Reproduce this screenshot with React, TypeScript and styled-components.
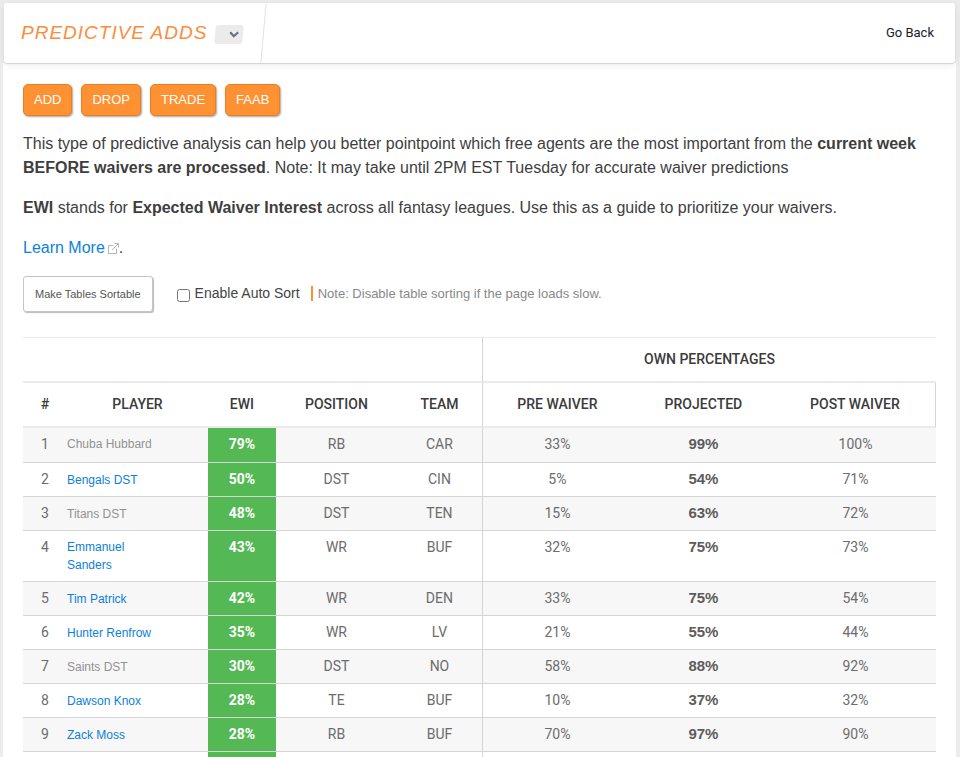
import React, { useState } from "react";
import styled, { createGlobalStyle } from "styled-components";

const GlobalStyle = createGlobalStyle`
  * { box-sizing: border-box; }
  body {
    margin: 0;
    overflow: hidden;
    background: #ececec;
    color: #3e3e3e;
    font-family: "Liberation Sans", Arial, sans-serif;
    font-size: 16px;
    line-height: 24px;
  }
  a { color: #0c81dc; text-decoration: none; }
  p { margin: 0 0 16px; }
`;

const Page = styled.div`
  padding: 3px 4px 0 3px;
  height: 100vh;
  overflow: hidden;
`;

const TopBar = styled.header`
  display: flex;
  align-items: stretch;
  justify-content: space-between;
  position: relative;
  height: 60px;
  margin: 0 1px;
  background: #fff;
  border-radius: 3px;
  box-shadow: 0 1px 1px #d4d4d4, 0 2px 8px rgba(0, 0, 0, 0.08);
`;

const TitleGroup = styled.div`
  display: flex;
  align-items: center;
  padding-left: 17px;
`;

const Title = styled.h1`
  margin: 0 8px 0 0;
  color: #fb8d3c;
  font-size: 19px;
  font-style: italic;
  font-weight: 400;
  letter-spacing: 1px;
  line-height: 58px;
`;

const MenuButton = styled.button`
  display: flex;
  align-items: center;
  justify-content: flex-end;
  width: 28px;
  height: 19px;
  margin: 3px 20px 0 0;
  padding: 0 4px 0 0;
  border: 0;
  border-radius: 3px;
  background: #ebebeb;
  color: #66747f;
  transform: skewX(-5deg);
`;

const Divider = styled.span`
  align-self: stretch;
  width: 1px;
  background: #e2e2e2;
  transform: skewX(-5deg);
`;

const BackLink = styled.a`
  align-self: center;
  padding: 0 21px 0 0;
  color: #17202b;
  font-family: Roboto, sans-serif;
  font-size: 13px;
`;

const Content = styled.main`
  padding: 21px 20px 0;
  background: #fff;
  min-height: 100%;
`;

const Actions = styled.nav`
  display: flex;
  gap: 9px;
  margin-bottom: 16px;
`;

const ActionLink = styled.a`
  height: 32px;
  padding: 0 10px;
  border: 1px solid #e87f24;
  border-radius: 5px;
  background: #fe9132;
  box-shadow: 1px 1px 2px rgba(0, 0, 0, 0.35);
  color: #fff;
  font-size: 13px;
  line-height: 29px;
`;

const SortBar = styled.div`
  display: flex;
  align-items: center;
  margin-bottom: 25px;
`;

const SortButton = styled.button`
  height: 36px;
  margin-right: 24px;
  padding: 0 11px;
  border: 1px solid #c5c5c5;
  border-radius: 3px;
  background: #fff;
  box-shadow: 1px 1px 1px #bbb;
  color: #555;
  font-family: inherit;
  font-size: 11px;
`;

const SortOption = styled.label`
  display: flex;
  align-items: center;
  color: #444;
  font-size: 14px;
  line-height: 20px;
  padding-bottom: 2px;

  input { width: 13px; height: 13px; margin: 5px 5px 0 0; }
`;

const Note = styled.span`
  margin: 0 0 2px 11px;
  padding-left: 5px;
  border-left: 2px solid #fb9137;
  color: #888;
  font-size: 13px;
  line-height: 15px;
`;

const Table = styled.table`
  width: 100%;
  table-layout: fixed;
  border-collapse: separate;
  border-spacing: 0;
  font-size: 14px;
  line-height: 18px;
`;

const Col = styled.col<{ $share: number }>`
  width: ${(p) => p.$share}%;
`;

const HeadCell = styled.th<{ $divided?: boolean; $closed?: boolean }>`
  height: 45px;
  padding: 0 0 1px;
  border-bottom: 2px solid #ebebeb;
  border-left: ${(p) => (p.$divided ? "1px solid #d5d5d5" : "0")};
  border-right: ${(p) => (p.$closed ? "1px solid #d5d5d5" : "0")};
  color: #3b3b3b;
  font-family: Roboto, sans-serif;
  font-weight: 500;
`;

const GroupCell = styled(HeadCell)`
  height: 46px;
  border-top: 1px solid #ebebeb;
`;

const Cell = styled.td<{ $divided?: boolean }>`
  padding: 7px 0 8px;
  border-bottom: 1px solid #d5d5d5;
  border-left: ${(p) => (p.$divided ? "1px solid #d5d5d5" : "0")};
  color: #6c6c6c;
  font-family: Roboto, sans-serif;
  text-align: center;
  vertical-align: top;
`;

const Row = styled.tr`
  &:nth-child(odd) { background: #f7f7f7; }
  &:first-child ${Cell} { padding-bottom: 9px; }
`;

const PlayerCell = styled(Cell)`
  padding: 7px 52px 7px 0;
  font-family: "Liberation Sans", Arial, sans-serif;
  font-size: 12px;
  text-align: left;
  vertical-align: middle;
`;

const PlayerLink = styled.a<{ $muted: boolean }>`
  color: ${(p) => (p.$muted ? "#929292" : "#0c81dc")};
`;

const EwiCell = styled(Cell)`
  background: #54b854;
  background-clip: padding-box;
  color: #fff;
  font-weight: 700;
`;

const ProjectedCell = styled(Cell)`
  color: #5c5c5c;
  font-family: "Liberation Sans", Arial, sans-serif;
  font-size: 15px;
  font-weight: 700;
`;

type Player = {
  name: string; ewi: number; position: string; team: string;
  pre: number; projected: number; post: number; muted?: boolean;
};

const players: Player[] = [
  { name: "Chuba Hubbard", ewi: 79, position: "RB", team: "CAR", pre: 33, projected: 99, post: 100, muted: true },
  { name: "Bengals DST", ewi: 50, position: "DST", team: "CIN", pre: 5, projected: 54, post: 71 },
  { name: "Titans DST", ewi: 48, position: "DST", team: "TEN", pre: 15, projected: 63, post: 72, muted: true },
  { name: "Emmanuel Sanders", ewi: 43, position: "WR", team: "BUF", pre: 32, projected: 75, post: 73 },
  { name: "Tim Patrick", ewi: 42, position: "WR", team: "DEN", pre: 33, projected: 75, post: 54 },
  { name: "Hunter Renfrow", ewi: 35, position: "WR", team: "LV", pre: 21, projected: 55, post: 44 },
  { name: "Saints DST", ewi: 30, position: "DST", team: "NO", pre: 58, projected: 88, post: 92, muted: true },
  { name: "Dawson Knox", ewi: 28, position: "TE", team: "BUF", pre: 10, projected: 37, post: 32 },
  { name: "Zack Moss", ewi: 28, position: "RB", team: "BUF", pre: 70, projected: 97, post: 90 },
];

const columnShares = [4.82, 15.44, 7.45, 13.25, 9.31, 16.43, 15.66, 17.64];

const ExternalMark = styled.svg`
  margin: 0 0 0 3px;
  vertical-align: -1px;
`;

const ExternalIcon = () => (
  <ExternalMark width="11" height="11" viewBox="0 0 11 11" fill="none" stroke="#b4b4b4" aria-hidden="true">
    <path d="M5.5 2.5h-5v8h8v-5M4 7l6-6M6.500 .5h4v4" />
  </ExternalMark>
);

export default function App() {
  const [autoSort, setAutoSort] = useState(false);
  return (
    <>
      <GlobalStyle />
      <Page>
        <TopBar>
          <TitleGroup>
            <Title>PREDICTIVE ADDS</Title>
            <MenuButton aria-label="Choose report">
              <svg width="10" height="7" viewBox="0 0 10 7" fill="none" stroke="currentColor" strokeWidth="2.2" aria-hidden="true">
                <path d="M1 1.2l4 4 4-4" />
              </svg>
            </MenuButton>
            <Divider />
          </TitleGroup>
          <BackLink href="#back">Go Back</BackLink>
        </TopBar>
        <Content>
          <Actions>
            {["ADD", "DROP", "TRADE", "FAAB"].map((name) => (
              <ActionLink key={name} href={`#${name.toLowerCase()}`}>{name}</ActionLink>
            ))}
          </Actions>
          <p>
            This type of predictive analysis can help you better pointpoint which free agents are the most important from the <b>current week BEFORE waivers are processed</b>. Note: It may take until 2PM EST Tuesday for accurate waiver predictions
          </p>
          <p>
            <b>EWI</b> stands for <b>Expected Waiver Interest</b> across all fantasy leagues. Use this as a guide to prioritize your waivers.
          </p>
          <p>
            <a href="#learn">Learn More<ExternalIcon /></a>.
          </p>
          <SortBar>
            <SortButton type="button">Make Tables Sortable</SortButton>
            <SortOption>
              <input type="checkbox" checked={autoSort} onChange={(e) => setAutoSort(e.target.checked)} />
              Enable Auto Sort
            </SortOption>
            <Note>Note: Disable table sorting if the page loads slow.</Note>
          </SortBar>
          <Table>
            <colgroup>
              {columnShares.map((share, i) => <Col key={i} $share={share} />)}
            </colgroup>
            <thead>
              <tr>
                <GroupCell colSpan={5} />
                <GroupCell colSpan={3} $divided>OWN PERCENTAGES</GroupCell>
              </tr>
              <tr>
                <HeadCell>#</HeadCell>
                <HeadCell>PLAYER</HeadCell>
                <HeadCell>EWI</HeadCell>
                <HeadCell>POSITION</HeadCell>
                <HeadCell>TEAM</HeadCell>
                <HeadCell $divided>PRE WAIVER</HeadCell>
                <HeadCell>PROJECTED</HeadCell>
                <HeadCell $closed>POST WAIVER</HeadCell>
              </tr>
            </thead>
            <tbody>
              {players.map((p, i) => (
                <Row key={p.name}>
                  <Cell>{i + 1}</Cell>
                  <PlayerCell><PlayerLink href="#player" $muted={!!p.muted}>{p.name}</PlayerLink></PlayerCell>
                  <EwiCell>{p.ewi}%</EwiCell>
                  <Cell>{p.position}</Cell>
                  <Cell>{p.team}</Cell>
                  <Cell $divided>{p.pre}%</Cell>
                  <ProjectedCell>{p.projected}%</ProjectedCell>
                  <Cell>{p.post}%</Cell>
                </Row>
              ))}
              <Row>
                <Cell /><PlayerCell /><EwiCell /><Cell /><Cell /><Cell $divided /><ProjectedCell /><Cell />
              </Row>
            </tbody>
          </Table>
        </Content>
      </Page>
    </>
  );
}
